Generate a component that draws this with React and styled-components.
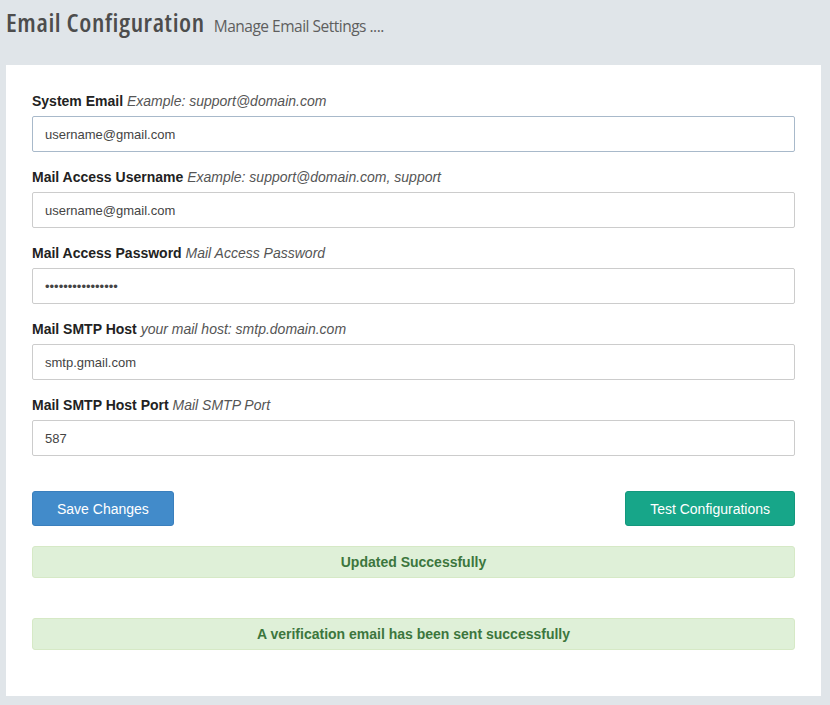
import React from "react";
import styled, { createGlobalStyle } from "styled-components";

const Global = createGlobalStyle`
  html, body { margin: 0; padding: 0; background: #e0e5e9; }
  body { font-family: "Liberation Sans", Arial, sans-serif; }
  * { box-sizing: border-box; }
`;

const Page = styled.div`
  width: 830px;
  height: 705px;
  padding: 0 9px 0 6px;
  display: flex;
  flex-direction: column;
`;

const Header = styled.div`
  height: 65px;
  display: flex;
  align-items: baseline;
  gap: 9px;
  padding-top: 5px;
`;

const Title = styled.h1`
  margin: 0;
  font-family: "Open Sans", sans-serif;
  font-weight: 600;
  font-stretch: 85%;
  font-size: 26px;
  letter-spacing: 0.6px;
  color: #4d4d4d;
  line-height: 34px;
`;

const Subtitle = styled.span`
  font-family: "Open Sans", sans-serif;
  font-size: 15.5px;
  letter-spacing: -0.5px;
  color: #5e5e5e;
`;

const Card = styled.div`
  background: #fff;
  height: 631px;
  padding: 26px 26px 0 26px;
`;

const Group = styled.div`
  margin-bottom: 15px;
`;

const Label = styled.label`
  display: block;
  font-size: 14px;
  line-height: 20px;
  margin-bottom: 5px;
  color: #222;
  font-weight: bold;
  & em {
    font-weight: normal;
    font-style: italic;
    color: #555;
  }
`;

const Input = styled.div`
  height: 36px;
  border: 1px solid ${(p) => (p.$focus ? "#a8b9ca" : "#cccccc")};
  border-radius: 2px;
  padding: 0 12px;
  display: flex;
  align-items: center;
  font-size: 13px;
  color: #444;
`;

const Actions = styled.div`
  display: flex;
  justify-content: space-between;
  padding-top: 20px;
`;

const Button = styled.button`
  height: 35px;
  padding: 0 ${(p) => p.$px}px;
  border-radius: 3px;
  border: 1px solid ${(p) => p.$border};
  background: ${(p) => p.$bg};
  color: #fff;
  font-family: "Liberation Sans", Arial, sans-serif;
  font-size: 14px;
`;

const Alert = styled.div`
  margin-top: ${(p) => p.$mt}px;
  height: 32px;
  background: #dff0d8;
  border: 1px solid #d6e9c6;
  border-radius: 3px;
  color: #3c763d;
  font-weight: bold;
  font-size: 14px;
  display: flex;
  align-items: center;
  justify-content: center;
`;

const fields = [
  ["System Email", "Example: support@domain.com", "username@gmail.com", true],
  ["Mail Access Username", "Example: support@domain.com, support", "username@gmail.com"],
  ["Mail Access Password", "Mail Access Password", "••••••••••••••••"],
  ["Mail SMTP Host", "your mail host: smtp.domain.com", "smtp.gmail.com"],
  ["Mail SMTP Host Port", "Mail SMTP Port", "587"],
];

export default function App() {
  return (
    <>
      <Global />
      <Page>
        <Header>
          <Title>Email Configuration</Title>
          <Subtitle>Manage Email Settings ....</Subtitle>
        </Header>
        <Card>
          {fields.map(([l, h, v, focus]) => (
            <Group key={l}>
              <Label>
                {l} <em>{h}</em>
              </Label>
              <Input $focus={focus}>{v}</Input>
            </Group>
          ))}
          <Actions>
            <Button $bg="#428bca" $border="#3a7fbd" $px={24}>Save Changes</Button>
            <Button $bg="#17a689" $border="#13987d" $px={24}>Test Configurations</Button>
          </Actions>
          <Alert $mt={20}>Updated Successfully</Alert>
          <Alert $mt={40}>A verification email has been sent successfully</Alert>
        </Card>
      </Page>
    </>
  );
}
